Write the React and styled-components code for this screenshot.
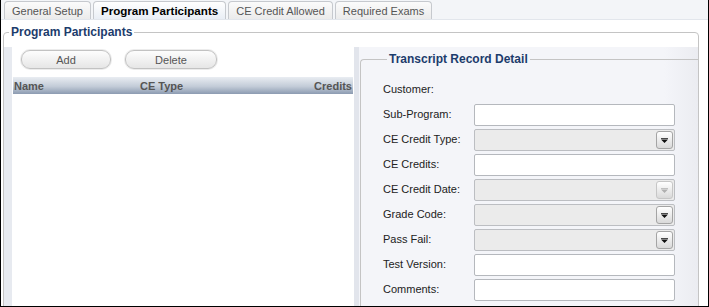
import styled, { createGlobalStyle } from "styled-components";

const GlobalStyle = createGlobalStyle`
  html, body {
    margin: 0;
    padding: 0;
    background: #ffffff;
  }
  * {
    box-sizing: border-box;
  }
`;

const tabs = ["General Setup", "Program Participants", "CE Credit Allowed", "Required Exams"];

const fields = [
  { label: "Customer:", kind: "none" },
  { label: "Sub-Program:", kind: "text" },
  { label: "CE Credit Type:", kind: "select" },
  { label: "CE Credits:", kind: "text" },
  { label: "CE Credit Date:", kind: "date" },
  { label: "Grade Code:", kind: "select" },
  { label: "Pass Fail:", kind: "select" },
  { label: "Test Version:", kind: "text" },
  { label: "Comments:", kind: "text" },
];

function DropArrow({ disabled }) {
  return (
    <svg width="7" height="5" viewBox="0 0 7 5">
      <path d="M0 0 H7 V0.8 H0 Z M0 1.5 H7 L3.5 5 Z" fill={disabled ? "#b0b0b0" : "#111"} />
    </svg>
  );
}

function Field({ kind }) {
  if (kind === "none") return null;
  if (kind === "text") return <TextBox />;
  const disabled = kind === "date";
  return (
    <SelectBox>
      <DropButton $disabled={disabled}>
        <DropArrow disabled={disabled} />
      </DropButton>
    </SelectBox>
  );
}

export default function App() {
  const selected = 1;

  return (
    <>
      <GlobalStyle />
      <Frame>
        <TabStrip>
          {tabs.map((t, i) => (
            <Tab key={t} $active={i === selected}>
              {t}
            </Tab>
          ))}
        </TabStrip>
        <Content>
          <OuterSet>
            <OuterLegend>Program Participants</OuterLegend>
            <Columns>
              <ListColumn>
                <ButtonRow>
                  <PillButton $w="90px">Add</PillButton>
                  <PillButton $w="92px">Delete</PillButton>
                </ButtonRow>
                <GridHeader>
                  <HeadCell $w="126px">Name</HeadCell>
                  <HeadCell $w="150px">CE Type</HeadCell>
                  <HeadCell $right>Credits</HeadCell>
                </GridHeader>
                <GridBody />
              </ListColumn>
              <DetailColumn>
                <DetailSet>
                  <DetailLegend>Transcript Record Detail</DetailLegend>
                  {fields.map((f) => (
                    <FieldRow key={f.label}>
                      <FieldLabel>{f.label}</FieldLabel>
                      <Field kind={f.kind} />
                    </FieldRow>
                  ))}
                </DetailSet>
              </DetailColumn>
            </Columns>
          </OuterSet>
        </Content>
      </Frame>
    </>
  );
}

const Frame = styled.div`
  width: 709px;
  height: 307px;
  border: 1px solid #000;
  border-top: none;
  background: #ffffff;
  display: flex;
  flex-direction: column;
  overflow: hidden;
  font-family: "Liberation Sans", Arial, sans-serif;
  font-size: 11px;
`;

const TabStrip = styled.div`
  height: 20px;
  flex: 0 0 20px;
  display: flex;
  align-items: flex-end;
  gap: 2px;
  padding-left: 3px;
  background: #f3f5f8;
  border-bottom: 1px solid #e2e6ec;
`;

const Tab = styled.div`
  height: 18px;
  padding: 0 7px;
  display: flex;
  align-items: center;
  border: 1px solid #c6c9ce;
  border-bottom: none;
  border-radius: 4px 4px 0 0;
  background: ${(p) =>
    p.$active
      ? "linear-gradient(#ffffff, #e9eef5)"
      : "linear-gradient(#fbfbfb, #ebebeb)"};
  color: ${(p) => (p.$active ? "#000" : "#555")};
  font-weight: ${(p) => (p.$active ? "bold" : "normal")};
  font-size: ${(p) => (p.$active ? "11.6px" : "11px")};
  white-space: nowrap;
`;

const Content = styled.div`
  flex: 1;
  padding: 6px 9px 0 2px;
  overflow: hidden;
`;

const OuterSet = styled.fieldset`
  margin: 0;
  padding: 8px 0 0 0;
  height: 320px;
  border: 1px solid #c4c4c4;
  border-radius: 4px;
  min-width: 0;
`;

const OuterLegend = styled.legend`
  margin-left: 5px;
  padding: 0 2px;
  font-weight: bold;
  font-size: 12px;
  line-height: 13px;
  color: #1c3c6c;
`;

const Columns = styled.div`
  display: flex;
  height: 100%;
`;

const ListColumn = styled.div`
  width: 355px;
  flex: 0 0 355px;
  display: flex;
  flex-direction: column;
  background: #ffffff;
  border-left: 8px solid #e7eaf0;
  border-right: 5px solid #e2e5ec;
  box-shadow: 1px 0 0 #a9acb2;
`;

const ButtonRow = styled.div`
  display: flex;
  gap: 14px;
  padding: 3px 0 0 9px;
`;

const PillButton = styled.button`
  width: ${(p) => p.$w};
  height: 19px;
  padding: 0;
  border: 1px solid #c2c2c2;
  border-radius: 9px;
  background: linear-gradient(#fdfdfd, #e6e6e6);
  box-shadow: 0 0 0 1px #ececec;
  color: #555;
  font-family: "Liberation Sans", Arial, sans-serif;
  font-size: 11px;
`;

const GridHeader = styled.div`
  margin: 8px 1px 0 1px;
  height: 17px;
  display: flex;
  align-items: center;
  padding: 0 1px;
  background: linear-gradient(#e9edf2, #c3ccd8 55%, #8c9bb1);
  color: #555;
  font-weight: bold;
`;

const HeadCell = styled.div`
  width: ${(p) => p.$w || "auto"};
  flex: ${(p) => (p.$right ? "1" : "0 0 auto")};
  text-align: ${(p) => (p.$right ? "right" : "left")};
`;

const GridBody = styled.div`
  flex: 1;
  background: #ffffff;
`;

const DetailColumn = styled.div`
  flex: 1;
  padding: 6px 0 0 1px;
  background: linear-gradient(90deg, #f4f5f9 90%, #ebecf1);
`;

const DetailSet = styled.fieldset`
  margin: 0;
  padding: 13px 0 0 22px;
  height: 100%;
  border: 1px solid #c4c4c4;
  border-right: none;
  border-radius: 4px 0 0 0;
  min-width: 0;
  display: flex;
  flex-direction: column;
  gap: 3px;
`;

const DetailLegend = styled.legend`
  margin-left: 4px;
  padding: 0 2px;
  font-weight: bold;
  font-size: 12px;
  line-height: 13px;
  color: #1c3c6c;
`;

const FieldRow = styled.div`
  height: 22px;
  display: flex;
  align-items: center;
`;

const FieldLabel = styled.div`
  width: 91px;
  flex: 0 0 91px;
  color: #222;
  font-size: 11px;
  padding-bottom: 3px;
`;

const TextBox = styled.div`
  width: 201px;
  height: 22px;
  border: 1px solid #b5b8bd;
  border-radius: 2px;
  background: #ffffff;
`;

const SelectBox = styled.div`
  width: 201px;
  height: 22px;
  border: 1px solid #bcbec2;
  border-radius: 2px;
  background: #ebebeb;
  display: flex;
  align-items: center;
  justify-content: flex-end;
  padding-right: 1px;
`;

const DropButton = styled.div`
  width: 17px;
  height: 18px;
  display: flex;
  align-items: center;
  justify-content: center;
  border: 1px solid ${(p) => (p.$disabled ? "#c6c6c6" : "#a4a4a4")};
  border-radius: 3px;
  background: linear-gradient(#ffffff, #d9d9d9);
`;
